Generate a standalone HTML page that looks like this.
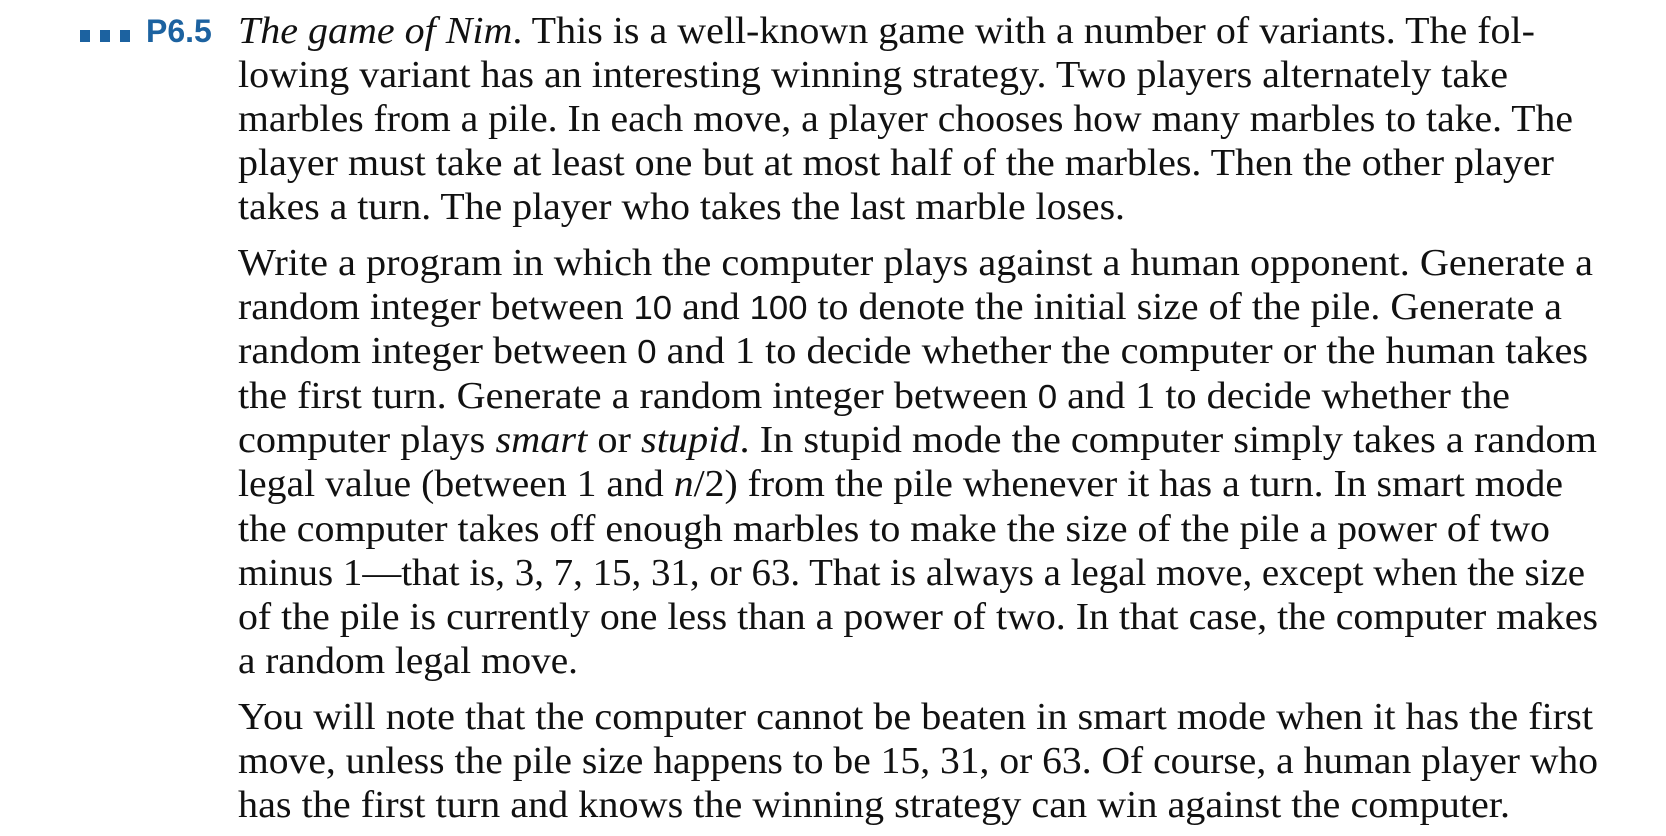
<!DOCTYPE html>
<html><head><meta charset="utf-8">
<style>
html,body{margin:0;padding:0;background:#fff;}
body{width:1666px;height:836px;position:relative;overflow:hidden;}
.sq{position:absolute;top:30px;width:10px;height:12px;background:#1c62a0;}
.lbl{position:absolute;left:146px;top:11px;font:bold 32px/40px "Liberation Sans",sans-serif;color:#1c62a0;}
.ln{position:absolute;left:238px;white-space:nowrap;font-family:"Liberation Serif",serif;font-size:38px;line-height:44px;color:#111;transform-origin:0 0;}
.c{font-family:"Liberation Sans",sans-serif;font-size:33px;}
</style></head><body>
<div class="sq" style="left:80px"></div>
<div class="sq" style="left:100px"></div>
<div class="sq" style="left:120px"></div>
<div class="lbl">P6.5</div>

<span class="ln"><i>The game of Nim</i>. This is a well-known game with a number of variants. The fol-</span>
<span class="ln">lowing variant has an interesting winning strategy. Two players alternately take</span>
<span class="ln">marbles from a pile. In each move, a player chooses how many marbles to take. The</span>
<span class="ln">player must take at least one but at most half of the marbles. Then the other player</span>
<span class="ln">takes a turn. The player who takes the last marble loses.</span>

<span class="ln">Write a program in which the computer plays against a human opponent. Generate a</span>
<span class="ln">random integer between <span class="c">10</span> and <span class="c">100</span> to denote the initial size of the pile. Generate a</span>
<span class="ln">random integer between <span class="c">0</span> and 1 to decide whether the computer or the human takes</span>
<span class="ln">the first turn. Generate a random integer between <span class="c">0</span> and 1 to decide whether the</span>
<span class="ln">computer plays <i>smart</i> or <i>stupid</i>. In stupid mode the computer simply takes a random</span>
<span class="ln">legal value (between 1 and <i>n</i>/2) from the pile whenever it has a turn. In smart mode</span>
<span class="ln">the computer takes off enough marbles to make the size of the pile a power of two</span>
<span class="ln">minus 1—that is, 3, 7, 15, 31, or 63. That is always a legal move, except when the size</span>
<span class="ln">of the pile is currently one less than a power of two. In that case, the computer makes</span>
<span class="ln">a random legal move.</span>

<span class="ln">You will note that the computer cannot be beaten in smart mode when it has the first</span>
<span class="ln">move, unless the pile size happens to be 15, 31, or 63. Of course, a human player who</span>
<span class="ln">has the first turn and knows the winning strategy can win against the computer.</span>

<script>
var base=[44,88,132,176,220,276,320,364,409,453,497,542,586,630,674,730,774,818];
var right=[1535,1508,1573,1554,1125,1593,1562,1588,1510,1597,1563,1550,1585,1598,578,1593,1598,1510];
var ls=document.querySelectorAll('.ln');
for(var i=0;i<ls.length;i++){
  var e=ls[i];
  e.style.top=(base[i]-35)+'px';
  var w=e.getBoundingClientRect().width;
  var s=(right[i]-238)/w;
  e.style.transform='scaleX('+s+')';
}
</script>
</body></html>
